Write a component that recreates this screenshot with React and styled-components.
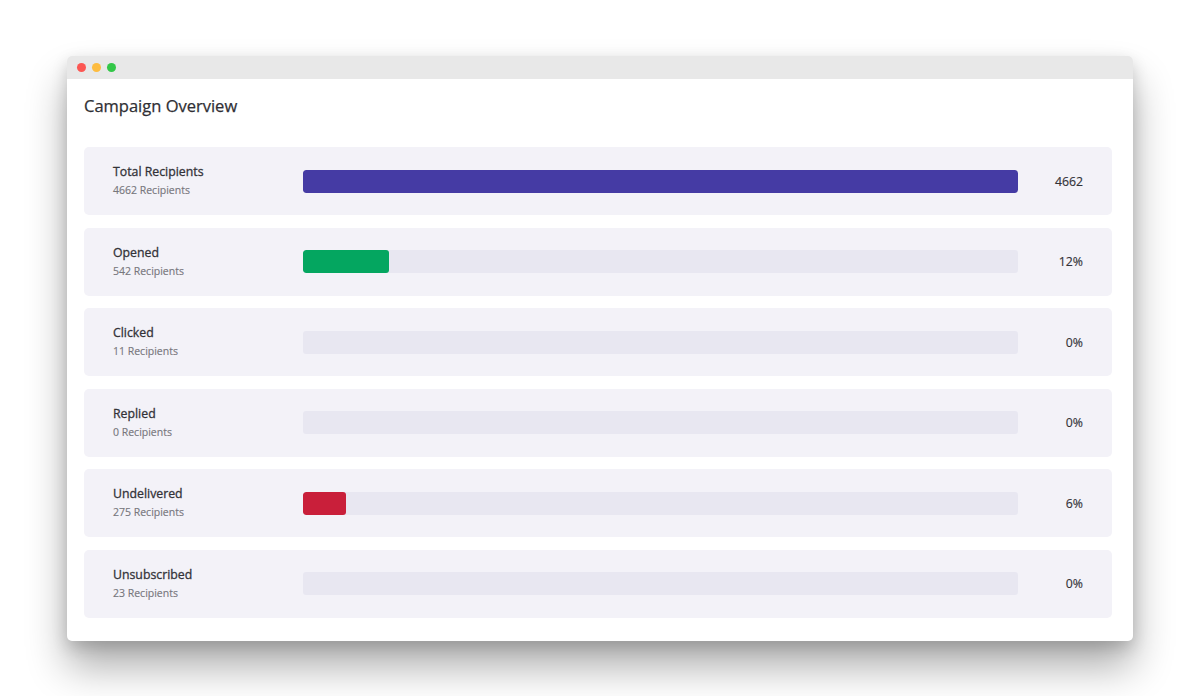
import React from "react";
import styled, { createGlobalStyle } from "styled-components";

const Global = createGlobalStyle`
  html, body { margin: 0; padding: 0; background: #ffffff; }
  body { font-family: "Open Sans", "Noto Sans", sans-serif; -webkit-font-smoothing: antialiased; }
`;

const Page = styled.div`
  min-height: 696px;
  box-sizing: border-box;
  padding: 56px 67px 0 67px;
  background: #ffffff;
`;

const Window = styled.div`
  width: 1066px;
  background: #ffffff;
  border-radius: 5px;
  box-shadow: 0 26px 40px rgba(0, 0, 0, 0.32), 0 6px 16px rgba(0, 0, 0, 0.16);
  overflow: hidden;
`;

const TitleBar = styled.div`
  height: 23px;
  background: #e8e8e8;
  display: flex;
  align-items: center;
  gap: 6px;
  padding-left: 10px;
`;

const Dot = styled.span`
  width: 9px;
  height: 9px;
  border-radius: 50%;
  background: ${(p) => p.$color};
`;

const Content = styled.div`
  padding: 15px 21px 23px 17px;
`;

const Title = styled.h1`
  margin: 0 0 29px 0;
  font-size: 16.5px;
  line-height: 24px;
  font-weight: 500;
  color: #2f2f34;
  -webkit-text-stroke: 0.25px #2f2f34;
`;

const List = styled.div`
  display: flex;
  flex-direction: column;
  gap: 12.6px;
`;

const Row = styled.div`
  display: grid;
  grid-template-columns: 190px 1fr 65px;
  align-items: center;
  height: 68px;
  padding: 0 29px;
  background: #f3f2f8;
  border-radius: 5px;
`;

const Labels = styled.div`
  display: flex;
  flex-direction: column;
`;

const Label = styled.div`
  font-size: 12.3px;
  line-height: 18px;
  font-weight: 500;
  color: #333338;
  -webkit-text-stroke: 0.3px #333338;
`;

const Sub = styled.div`
  font-size: 10.5px;
  line-height: 18px;
  font-weight: 500;
  color: #77777d;
  -webkit-text-stroke: 0.15px #77777d;
`;

const Track = styled.div`
  height: 23px;
  background: #e8e7f1;
  border-radius: 3px;
  overflow: hidden;
  display: flex;
`;

const Fill = styled.div`
  height: 100%;
  background: ${(p) => p.$color};
  border-radius: 3px;
`;

const Value = styled.div`
  text-align: right;
  font-size: 12.3px;
  font-weight: 500;
  color: #333338;
  -webkit-text-stroke: 0.15px #333338;
`;

const rows = [
  { label: "Total Recipients", sub: "4662 Recipients", pct: 100, value: "4662", color: "#453ba4" },
  { label: "Opened", sub: "542 Recipients", pct: 12, value: "12%", color: "#04a660" },
  { label: "Clicked", sub: "11 Recipients", pct: 0, value: "0%", color: "#453ba4" },
  { label: "Replied", sub: "0 Recipients", pct: 0, value: "0%", color: "#453ba4" },
  { label: "Undelivered", sub: "275 Recipients", pct: 6, value: "6%", color: "#c91f3a" },
  { label: "Unsubscribed", sub: "23 Recipients", pct: 0, value: "0%", color: "#453ba4" },
];

export default function App() {
  return (
    <>
      <Global />
      <Page>
        <Window>
          <TitleBar>
            <Dot $color="#fc5753" />
            <Dot $color="#fdbc40" />
            <Dot $color="#33c748" />
          </TitleBar>
          <Content>
            <Title>Campaign Overview</Title>
            <List>
              {rows.map((r) => (
                <Row key={r.label}>
                  <Labels>
                    <Label>{r.label}</Label>
                    <Sub>{r.sub}</Sub>
                  </Labels>
                  <Track>
                    {r.pct > 0 && <Fill $color={r.color} style={{ width: `${r.pct}%` }} />}
                  </Track>
                  <Value>{r.value}</Value>
                </Row>
              ))}
            </List>
          </Content>
        </Window>
      </Page>
    </>
  );
}
